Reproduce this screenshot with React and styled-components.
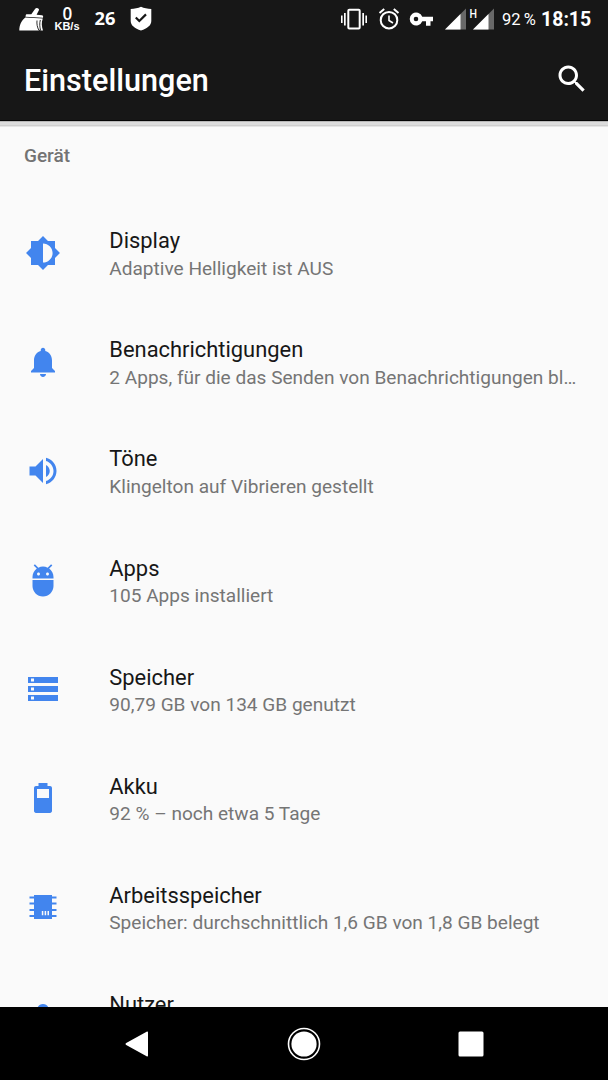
import React from 'react';
import styled, { createGlobalStyle } from 'styled-components';

const GlobalStyle = createGlobalStyle`
  *, *::before, *::after { box-sizing: border-box; }
  body { margin: 0; background: #fafafa; font-family: Roboto, 'Liberation Sans', sans-serif; }
`;

const Screen = styled.div`
  width: 608px;
  height: 1080px;
  display: flex;
  flex-direction: column;
  overflow: hidden;
  background: #fafafa;
`;

const Header = styled.header`
  flex: none;
  height: 121px;
  background: #171717;
  color: #fff;
  border-bottom: 1px solid #050505;
`;

const Shadow = styled.div`
  flex: none;
  height: 6px;
  background: linear-gradient(#b8b8b8 0 1px, #dcdcdc 1px 4px, #cfcfcf 4px 5px, #e6e6e6 5px);
`;

const StatusBar = styled.div`
  height: 38px;
  display: flex;
  justify-content: space-between;
  padding: 0 16px 0 18px;
`;

const StatusGroup = styled.div`
  display: flex;
  align-items: center;
  height: 38px;
`;

const StatusIcon = styled.svg`
  flex: none;
  display: block;
  width: ${(p) => p.$w}px;
  height: 26px;
  margin-left: ${(p) => p.$gap || 0}px;
  fill: #fff;
`;

const NetSpeed = styled.div`
  width: 28px;
  margin-left: 9px;
  display: flex;
  flex-direction: column;
  align-items: center;
`;

const SpeedValue = styled.span`
  font: 600 18.5px/15px 'Open Sans', sans-serif;
  transform: scaleX(0.92);
`;

const SpeedUnit = styled.span`
  font: 700 11px/13px 'Liberation Sans', sans-serif;
`;

const Count = styled.span`
  width: 22px;
  margin-left: 13px;
  padding-bottom: 2px;
  text-align: center;
  font: 700 18.3px/24px 'Open Sans', sans-serif;
`;

const Percent = styled.span`
  width: 36px;
  margin-left: 7px;
  padding-top: 2px;
  font-size: 16.5px;
  line-height: 24px;
  white-space: nowrap;
  word-spacing: -1px;
`;

const Clock = styled.span`
  width: 51px;
  margin-left: 3px;
  padding-top: 2px;
  font-size: 19.5px;
  font-weight: 700;
  line-height: 24px;
  white-space: nowrap;
`;

const TitleBar = styled.div`
  height: 83px;
  display: flex;
  align-items: center;
  justify-content: space-between;
  padding: 0 18.5px 0 24px;
`;

const Title = styled.h1`
  margin: 3px 0 0;
  font-size: 30.6px;
  line-height: 36px;
  font-weight: 500;
`;

const SearchIcon = styled.svg`
  display: block;
  width: 36px;
  height: 36px;
  margin-top: -2px;
  fill: #fff;
`;

const Content = styled.main`
  flex: 1;
  min-height: 0;
  overflow: hidden;
  color: #171717;
`;

const SectionTitle = styled.h2`
  margin: 0;
  height: 71px;
  padding: 17px 24px 0;
  color: #737373;
  font-size: 19px;
  line-height: 24px;
  font-weight: 500;
`;

const Row = styled.div`
  height: 109.1px;
  display: flex;
  align-items: center;
  padding: 0 28px 0 24.5px;
`;

const RowIcon = styled.svg`
  flex: none;
  width: 36px;
  height: 36px;
  margin-right: 48.8px;
  fill: #4285ee;
`;

const RowText = styled.div`
  flex: 1;
  min-width: 0;
  padding-top: 3.8px;
`;

const RowTitle = styled.div`
  font-size: 21.9px;
  line-height: 27.4px;
  white-space: nowrap;
`;

const RowSummary = styled.div`
  color: #757575;
  font-size: 19.07px;
  line-height: 27px;
  white-space: nowrap;
  overflow: hidden;
  text-overflow: ellipsis;
`;

const NavBar = styled.nav`
  flex: none;
  height: 73px;
  display: flex;
  align-items: center;
  justify-content: space-between;
  padding: 0 119px;
  background: #000;
`;

const NavIcon = styled.svg`
  display: block;
  width: 36px;
  height: 36px;
`;

const items = [
  {
    title: 'Display',
    summary: 'Adaptive Helligkeit ist AUS',
    path: 'M20 15.31L23.31 12 20 8.69V4h-4.69L12 .69 8.69 4H4v4.69L.69 12 4 15.31V20h4.69L12 23.31 15.31 20H20v-4.69zM12 18.4V5.6c3.53 0 6.4 2.87 6.4 6.4s-2.87 6.4-6.4 6.4z',
  },
  {
    title: 'Benachrichtigungen',
    summary: '2 Apps, für die das Senden von Benachrichtigungen blockiert ist',
    path: 'M12 22c1.1 0 2-.9 2-2h-4c0 1.1.89 2 2 2zm6-6v-5c0-3.07-1.64-5.64-4.5-6.32V4c0-.83-.67-1.5-1.5-1.5s-1.5.67-1.5 1.5v.68C7.63 5.36 6 7.92 6 11v5l-2 2v1h16v-1l-2-2z',
  },
  {
    title: 'Töne',
    summary: 'Klingelton auf Vibrieren gestellt',
    path: 'M3 9v6h4l5 5V4L7 9H3zm13.5 3c0-1.77-1.02-3.29-2.5-4.03v8.05c1.48-.73 2.5-2.25 2.5-4.02zM14 3.23v2.06c2.89.86 5 3.54 5 6.71s-2.11 5.85-5 6.71v2.06c4.01-.91 7-4.49 7-8.77s-2.99-7.86-7-8.77z',
  },
  {
    title: 'Apps',
    summary: '105 Apps installiert',
    path: 'M5 16c0 3.87 3.13 7 7 7s7-3.13 7-7v-4H5v4zM16.12 4.37l2.1-2.1-.82-.83-2.3 2.31C14.16 3.28 13.12 3 12 3s-2.16.28-3.09.75L6.6 1.44l-.82.83 2.1 2.1C6.14 5.64 5 7.68 5 10v1h14v-1c0-2.32-1.14-4.36-2.88-5.63zM9 9c-.55 0-1-.45-1-1s.45-1 1-1 1 .45 1 1-.45 1-1 1zm6 0c-.55 0-1-.45-1-1s.45-1 1-1 1 .45 1 1-.45 1-1 1z',
  },
  {
    title: 'Speicher',
    summary: '90,79 GB von 134 GB genutzt',
    path: 'M2 20h20v-4H2v4zm2-3h2v2H4v-2zM2 4v4h20V4H2zm4 3H4V5h2v2zm-4 7h20v-4H2v4zm2-3h2v2H4v-2z',
  },
  {
    title: 'Akku',
    summary: '92 % – noch etwa 5 Tage',
    path: 'M16.7 4H15V2H9v2H7.3C6.6 4 6 4.6 6 5.3v15.4c0 .7.6 1.3 1.3 1.3h9.4c.7 0 1.3-.6 1.3-1.3V5.3c0-.7-.6-1.3-1.3-1.3zM16 12H8V6h8v6z',
  },
  {
    title: 'Arbeitsspeicher',
    summary: 'Speicher: durchschnittlich 1,6 GB von 1,8 GB belegt',
    path: 'M6 4h12v1h3v1.3h-3V9h3v1.3h-3v3h3v1.3h-3v2.7h3v1.3h-3V20H6v-1.4H3v-1.3h3v-2.7H3v-1.3h3v-3H3V9h3V6.3H3V5h3zM11.2 14.7v2.8h1v-2.8zM13.1 14.7v2.8h1v-2.8zM15 14.7v2.8h1v-2.8z',
  },
  {
    title: 'Nutzer',
    summary: 'Angemeldet',
    path: 'M12 12c2.21 0 4-1.79 4-4s-1.79-4-4-4-4 1.79-4 4 1.79 4 4 4zm0 2c-2.67 0-8 1.34-8 4v2h16v-2c0-2.66-5.33-4-8-4z',
  },
];

function Notifications() {
  return (
    <StatusGroup>
      <StatusIcon $w={26} viewBox="0 0 26 26">
        <path d="M13.300 8.200 17.200 2.800c1.200-1.500 4.600-.3 3.700 1.500L18.600 8.700l5.400.5c.8.100 1.200.6 1.100 1.300l-.1 1.300L7.500 10.800l.2-1.400c.1-.8.6-1.300 1.400-1.200z" />
        <path d="M7.300 11.600 24.800 12.600c-1.600 4.200-1.100 8 .2 11.900h-2.500l-1.500-1 .2 1H1.300c0-5.300 2.200-10 6-12.900z" />
        <path d="M19 14.500c-.3 3.500.1 6.500 2 10M22.300 14c-.9 3.500-.6 7 .3 10.500" fill="none" stroke="#171717" strokeWidth=".9" />
      </StatusIcon>
      <NetSpeed>
        <SpeedValue>0</SpeedValue>
        <SpeedUnit>KB/s</SpeedUnit>
      </NetSpeed>
      <Count>26</Count>
      <StatusIcon $w={22} $gap={14} viewBox="0 0 22 26">
        <path d="M11 .8c3 1.400 6.500 2 10.300 2.100V15c0 4.500-4 7.300-10.300 9.600C4.700 22.300.7 19.500.7 15V2.900C4.500 2.800 8 2.200 11 .8z" />
        <path d="m5.800 11.500 3.500 3.500 6.700-6.600" fill="none" stroke="#171717" strokeWidth="2.200" />
      </StatusIcon>
    </StatusGroup>
  );
}

function SystemStatus() {
  return (
    <StatusGroup>
      <StatusIcon $w={28} viewBox="0 0 28 26">
        <path d="M1 9.500h1.600v7.500H1zM4 7h1.700v12.500H4zM22.300 7H24v12.500h-1.700zM25.400 9.500H27v7.500h-1.600z" />
        <rect x="8.300" y="3.800" width="11.400" height="18.700" rx="1" fill="none" stroke="#fff" strokeWidth="2" />
      </StatusIcon>
      <StatusIcon $w={22} $gap={10} viewBox="0 0 22 26">
        <g fill="none" stroke="#fff" strokeWidth="2">
          <circle cx="11" cy="14.200" r="8.300" />
          <path d="M1.500 7 6.200 3M20.500 7l-4.700-4" />
          <path d="M11 9.500v5l4 2.500" strokeWidth="1.600" />
        </g>
      </StatusIcon>
      <StatusIcon $w={24} $gap={9} viewBox="0 0 24 26">
        <path fillRule="evenodd" d="M13.300 10.700A6.500 6.500 0 1 0 13.300 15.300H17v4.500h4.500v-4.500H24v-4.600zM7 15.300a2.300 2.300 0 1 1 0-4.600 2.300 2.300 0 0 1 0 4.600z" />
      </StatusIcon>
      <StatusIcon $w={22} $gap={11} viewBox="0 0 22 26">
        <path d="M1 23.500 22 2.500v21z" fill="#686868" />
        <path d="M1 23.500 16.500 8v15.500z" />
      </StatusIcon>
      <StatusIcon $w={27} $gap={2} viewBox="0 0 27 26">
        <path d="M5 23.500 26 2.500v21z" fill="#686868" />
        <path d="M5 23.500 20.500 8v15.500z" />
        <text x="1.600" y="11.700" fontSize="13" fontWeight="500" textLength="7.500" lengthAdjust="spacingAndGlyphs">H</text>
      </StatusIcon>
      <Percent>92 %</Percent>
      <Clock>18:15</Clock>
    </StatusGroup>
  );
}

function SettingsRow({ title, summary, path }) {
  return (
    <Row>
      <RowIcon viewBox="0 0 24 24"><path fillRule="evenodd" d={path} /></RowIcon>
      <RowText>
        <RowTitle>{title}</RowTitle>
        <RowSummary>{summary}</RowSummary>
      </RowText>
    </Row>
  );
}

export default function App() {
  return (
    <>
      <GlobalStyle />
      <Screen>
        <Header>
          <StatusBar>
            <Notifications />
            <SystemStatus />
          </StatusBar>
          <TitleBar>
            <Title>Einstellungen</Title>
            <SearchIcon viewBox="0 0 24 24">
              <path d="M15.500 14h-.79l-.28-.27C15.410 12.590 16 11.110 16 9.500 16 5.910 13.090 3 9.500 3S3 5.910 3 9.500 5.910 16 9.500 16c1.610 0 3.090-.59 4.230-1.570l.27.28v.79l5 4.990L20.490 19l-4.990-5zm-6 0C7.010 14 5 11.990 5 9.500S7.010 5 9.500 5 14 7.010 14 9.500 11.990 14 9.500 14z" />
            </SearchIcon>
          </TitleBar>
        </Header>
        <Shadow />
        <Content>
          <SectionTitle>Gerät</SectionTitle>
          {items.map((item) => <SettingsRow key={item.title} {...item} />)}
        </Content>
        <NavBar>
          <NavIcon viewBox="0 0 36 36">
            <path d="M29 6.500v23c0 1-.5 1.300-1.400.8L7.200 18.900c-.9-.5-.9-1.300 0-1.800L27.600 5.700c.9-.5 1.400-.2 1.400.8z" fill="#fff" />
          </NavIcon>
          <NavIcon viewBox="0 0 36 36">
            <circle cx="18" cy="18" r="15.500" fill="none" stroke="#fff" strokeWidth="1.600" />
            <circle cx="18" cy="18" r="12.600" fill="#fff" />
          </NavIcon>
          <NavIcon viewBox="0 0 36 36">
            <rect x="5.500" y="5.500" width="25" height="25" rx="1.500" fill="#fff" />
          </NavIcon>
        </NavBar>
      </Screen>
    </>
  );
}
